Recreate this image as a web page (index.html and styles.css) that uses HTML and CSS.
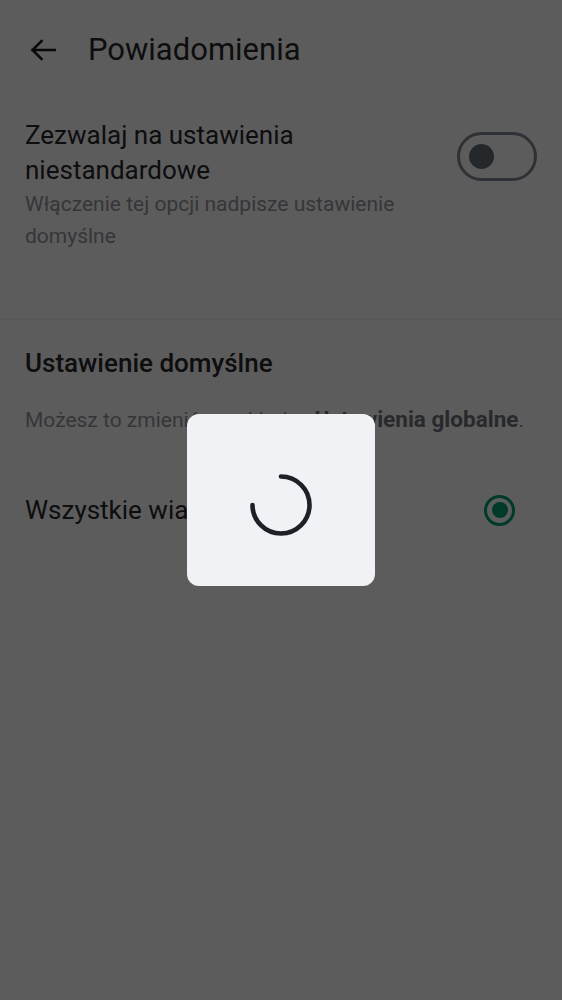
FILE: index.html
```html
<!DOCTYPE html>
<html lang="pl">
<head>
<meta charset="utf-8">
<title>Powiadomienia</title>
<link rel="stylesheet" href="styles.css">
</head>
<body>
<div class="screen">
  <header class="topbar">
    <button class="back" aria-label="Wstecz">
      <svg width="26" height="22" viewBox="0 0 26 22"><path d="M25 11H2.5M11.5 2L2.5 11L11.5 20" fill="none" stroke="currentColor" stroke-width="2.6" stroke-linecap="square"/></svg>
    </button>
    <h1 class="title">Powiadomienia</h1>
  </header>

  <section class="custom">
    <div class="custom-text">
      <div class="item-title">Zezwalaj na ustawienia niestandardowe</div>
      <div class="item-sub">Włączenie tej opcji nadpisze ustawienie domyślne</div>
    </div>
    <div class="switch"><span class="thumb"></span></div>
  </section>

  <section class="defaults">
    <h2 class="section-title">Ustawienie domyślne</h2>
    <p class="hint">Możesz to zmienić w zakładce <b>Ustawienia globalne</b>.</p>
    <div class="option">
      <span class="option-label">Wszystkie wiadomości</span>
      <span class="radio"><span class="radio-dot"></span></span>
    </div>
  </section>
</div>

<div class="scrim">
  <div class="loader">
    <svg width="70" height="70" viewBox="0 0 70 70"><path d="M35 6.5A28.5 28.5 0 1 1 6.5 35" fill="none" stroke="#1e2025" stroke-width="4.6" stroke-linecap="round"/></svg>
  </div>
</div>
</body>
</html>
```

FILE: styles.css
```css
html, body {
  margin: 0;
  padding: 0;
  background: #ffffff;
}
body {
  font-family: Roboto, "Noto Sans", "Liberation Sans", sans-serif;
  color: #27272c;
}
.screen {
  width: 562px;
  min-height: 1000px;
}
.topbar {
  height: 100px;
  display: flex;
  align-items: center;
  padding: 0 0 0 30px;
  box-sizing: border-box;
}
.back {
  background: none;
  border: 0;
  padding: 0;
  margin: 0;
  width: 26px;
  height: 22px;
  color: #1b1b1f;
  display: flex;
}
.title {
  margin: 0 0 0 32px;
  font-size: 31px;
  font-weight: 400;
  line-height: 38px;
  color: #27272c;
}
.custom {
  display: flex;
  align-items: flex-start;
  justify-content: space-between;
  padding: 18px 25px 0 25px;
  height: 220px;
  box-sizing: border-box;
  border-bottom: 1px solid #f0f0f0;
}
.custom-text {
  width: 410px;
}
.item-title {
  font-size: 26px;
  line-height: 35px;
  color: #27272c;
}
.item-sub {
  font-size: 21px;
  line-height: 32px;
  color: #93959e;
  margin-top: 0;
}
.switch {
  margin-top: 14px;
  width: 80px;
  height: 49px;
  box-sizing: border-box;
  border: 3px solid #808892;
  border-radius: 25px;
  display: flex;
  align-items: center;
  padding-left: 9px;
}
.thumb {
  width: 25px;
  height: 25px;
  border-radius: 50%;
  background: #676f77;
}
.defaults {
  padding: 27px 25px 0 25px;
}
.section-title {
  margin: 0;
  font-size: 26px;
  font-weight: 500;
  line-height: 32px;
  color: #27272c;
}
.hint {
  margin: 24px 0 0 0;
  font-size: 21px;
  line-height: 32px;
  color: #93959e;
}
.hint b {
  font-weight: 700;
  font-size: 22.5px;
  color: #6f717b;
}
.option {
  margin-top: 56px;
  display: flex;
  align-items: center;
  justify-content: space-between;
  height: 36px;
  padding-right: 22px;
}
.option-label {
  font-size: 26px;
  line-height: 36px;
  color: #27272c;
}
.radio {
  width: 31px;
  height: 31px;
  box-sizing: border-box;
  border: 3px solid #00a175;
  border-radius: 50%;
  display: flex;
  align-items: center;
  justify-content: center;
}
.radio-dot {
  width: 16px;
  height: 16px;
  border-radius: 50%;
  background: #00a175;
}
.scrim {
  position: fixed;
  inset: 0;
  background: rgba(0, 0, 0, 0.64);
  display: flex;
  align-items: center;
  justify-content: center;
}
.loader {
  width: 188px;
  height: 172px;
  box-sizing: border-box;
  padding-top: 10px;
  background: #f1f2f6;
  border-radius: 12px;
  display: flex;
  align-items: center;
  justify-content: center;
}
```
